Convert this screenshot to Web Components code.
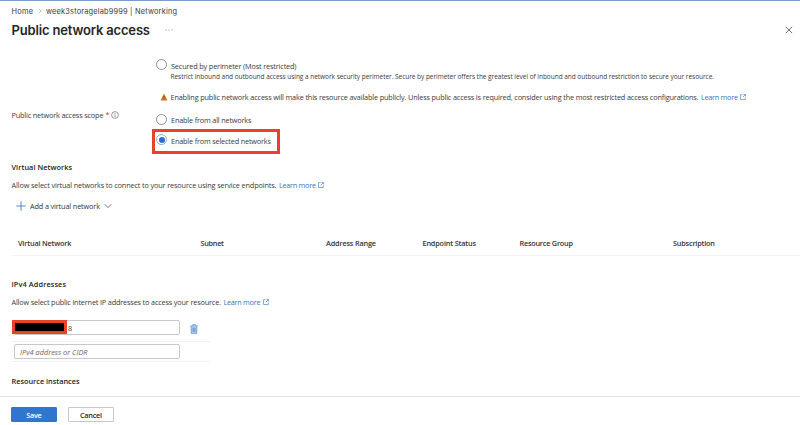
<!DOCTYPE html>
<html lang="en">
<head>
<meta charset="utf-8">
<title>Public network access</title>
<style>
    html, body{
        margin: 0;
        height: 100%;
        overflow: hidden;
        background: #fff;
    }
</style>
</head>
<body>
<network-page></network-page>

<script>
// one line of text, tracked so that it fills the given width
class textLine extends HTMLElement{
    constructor(){
        super();
        this.attachShadow({mode:"open"});
    }
    connectedCallback(){
        this.shadowRoot.innerHTML = `
        <style>
            :host{ display: block; flex: none; white-space: nowrap; }
            span{ display: inline-block; }
        </style>
        <span><slot></slot></span>`;
        const width = parseFloat(this.getAttribute("width"));
        const span = this.shadowRoot.querySelector("span");
        const natural = span.getBoundingClientRect().width;
        const count = this.textContent.length;
        this.style.width = width + "px";
        span.style.letterSpacing = (width - natural) / Math.max(1, count - 1) + "px";
    }
}

class uiIcon extends HTMLElement{
    constructor(){
        super();
        this.attachShadow({mode:"open"});
    }
    connectedCallback(){
        const shapes = {
            sep: [4, 6, `<path d="M1 .8 3 3 1 5.2" stroke="#888" stroke-width=".6"/>`],
            close: [8, 8, `<path d="M.8.8 7.2 7.2M7.2.8.8 7.2" stroke="#444" stroke-width=".75"/>`],
            dots: [8, 2, `<path d="M.5 1h1M3.5 1h1M6.5 1h1" stroke="#777" stroke-width=".8"/>`],
            warn: [8, 8, `<path d="M4 .6 7.6 7.5H.4z" fill="#d17a2b"/><path d="M4 3v2.2M4 5.8v.8" stroke="#5a3310" stroke-width=".7"/>`],
            info: [8, 8, `<circle cx="4" cy="4" r="3.4" stroke="#555" stroke-width=".6"/><path d="M4 3.5V6M4 2v.8" stroke="#555" stroke-width=".65"/>`],
            open: [6, 6, `<path d="M2.6.7H.5v4.8h4.8V3.4M3.5.5h2v2M5.4.6 2.8 3.2" stroke="#3f7fc6" stroke-width=".65"/>`],
            plus: [10, 10, `<path d="M5 .3v9.4M.3 5h9.4" stroke="#3f7fc6" stroke-width=".9"/>`],
            down: [8, 6, `<path d="M.7 1.2 4 4.6 7.3 1.2" stroke="#444" stroke-width=".7"/>`],
            bin: [8, 10, `<path d="M1.2 2.2h5.6v7.1H1.2z" fill="#bcd6f0"/><path d="M.2 1.9h7.6M2.7 1.7V.6h2.6v1.1M1.2 2.2v7.2h5.6V2.2M3 3.5V8M4 3.5V8M5 3.5V8" stroke="#3c7cc0" stroke-width=".65"/>`]
        };
        const [w, h, body] = shapes[this.getAttribute("name")];
        this.shadowRoot.innerHTML = `
        <style>
            :host{ display: block; flex: none; width: ${w}px; height: ${h}px; }
            svg{ display: block; }
        </style>
        <svg width="${w}" height="${h}" viewBox="0 0 ${w} ${h}" fill="none">${body}</svg>`;
    }
}

class learnMore extends HTMLElement{
    constructor(){
        super();
        this.attachShadow({mode:"open"});
    }
    connectedCallback(){
        this.shadowRoot.innerHTML = `
        <style>
            :host{ display: flex; align-items: center; gap: 2px; margin-left: 2.5px; color: #3576bd; }
        </style>
        <text-line width="37">Learn more</text-line><ui-icon name="open"></ui-icon>`;
    }
}

class radioOption extends HTMLElement{
    constructor(){
        super();
        this.attachShadow({mode:"open"});
    }
    connectedCallback(){
        this.shadowRoot.innerHTML = `
        <style>
            :host{ display: flex; align-items: center; gap: 4px; height: 11px; }
            .ring{
                box-sizing: border-box;
                width: 11px;
                height: 11px;
                border: 1px solid #8f8f8f;
                border-radius: 50%;
                display: grid;
                place-items: center;
            }
            :host([checked]) .ring{ border-color: #86abd8; }
            :host([checked]) .ring::after{
                content: "";
                width: 6px;
                height: 6px;
                border-radius: 50%;
                background: #2a6fcb;
            }
            .label{ padding-top: 2px; }
        </style>
        <div class="ring"></div>
        <div class="label"><slot></slot></div>`;
    }
}

class ipInput extends HTMLElement{
    constructor(){
        super();
        this.attachShadow({mode:"open"});
    }
    connectedCallback(){
        this.shadowRoot.innerHTML = `
        <style>
            :host{
                box-sizing: border-box;
                display: flex;
                align-items: center;
                width: 166px;
                height: 15px;
                border: 1px solid #c8c8c8;
                border-radius: 2px;
                padding-left: 5px;
                position: relative;
            }
        </style>
        <slot></slot>`;
    }
}

class uiButton extends HTMLElement{
    constructor(){
        super();
        this.attachShadow({mode:"open"});
    }
    connectedCallback(){
        this.shadowRoot.innerHTML = `
        <style>
            :host{
                box-sizing: border-box;
                display: flex;
                align-items: center;
                justify-content: center;
                width: 46px;
                height: 15px;
                border: 1px solid #c8c8c8;
                border-radius: 1px;
                color: #2b2b2b;
                font-weight: 600;
            }
            :host([primary]){ background: #3075ce; border-color: #3075ce; color: #fff; }
        </style>
        <slot></slot>`;
    }
}

class networkPage extends HTMLElement{
    constructor(){
        super();
        this.attachShadow({mode:"open"});
    }
    connectedCallback(){
        this.shadowRoot.innerHTML = `
        <style>
            :host{
                box-sizing: border-box;
                display: flex;
                flex-direction: column;
                width: 800px;
                height: 425px;
                border-top: 1px solid #7b9dcc;
                font: 7.3px/10px "Open Sans", "Noto Sans", sans-serif;
                color: #3a3a3a;
            }
            .row{ display: flex; align-items: center; padding-left: 11.5px; }
            .crumbs{ height: 19px; padding-top: 1px; font-family: Inter, sans-serif; font-size: 7.4px; }
            .crumbs ui-icon{ margin: 0 4px 2px 5px; }
            .title{
                height: 18px;
                padding-right: 7px;
                font: 600 13px/18px Inter, sans-serif;
                color: #262626;
            }
            .title ui-icon[name="dots"]{ margin-left: 14.5px; }
            .title ui-icon[name="close"]{ margin-left: auto; }
            .form{
                display: grid;
                grid-template-columns: 144.5px 1fr;
                padding: 20px 0 0 11.5px;
                height: 95px;
            }
            .scope{ display: flex; height: 10px; padding-top: 51px; align-items: center; }
            .scope text-line[width="3"]{ margin-left: 2px; color: #c0392b; }
            .scope ui-icon{ margin-left: 2.5px; }
            .note{ font-size: 6.5px; line-height: 9px; padding-left: 14.5px; margin-top: 1.5px; }
            .warning{ display: flex; align-items: center; padding-left: 4px; margin-top: 10px; height: 12px; }
            .warning ui-icon{ margin-right: 2.5px; }
            .all{ margin-top: 11px; }
            .selected{
                box-sizing: border-box;
                width: 128px;
                height: 25px;
                margin: 4px 0 0 -4px;
                padding: 2.5px 0 0 1px;
                border: 3px solid #e8432a;
            }
            .heading{ height: 18px; font-weight: 600; color: #222; }
            .text{ height: 18px; }
            .add{ height: 22px; margin-top: 1px; padding-left: 15.5px; color: #333; }
            .add ui-icon[name="plus"]{ margin-right: 4.5px; }
            .add ui-icon[name="down"]{ margin-left: 4px; }
            .table{
                display: grid;
                grid-template-columns: 182.5px 125.5px 96.5px 97px 153.5px 1fr;
                align-items: center;
                height: 24px;
                margin: 14px 0 0 11.5px;
                padding-left: 6.5px;
                border-bottom: 1px solid #f3f3f3;
                font-weight: 600;
                color: #333;
            }
            .ip{
                display: flex;
                align-items: center;
                gap: 10px;
                width: 196px;
                height: 19px;
                margin-left: 11.5px;
                padding-left: 2.5px;
                border-bottom: 1px solid #f1f1f1;
            }
            .first{ align-items: flex-start; height: 21px; margin-top: 9px; }
            .first ip-input{ padding-left: 53px; }
            .first ui-icon{ margin-top: 4px; }
            .redacted{
                position: absolute;
                left: -3px;
                top: -1.5px;
                box-sizing: border-box;
                width: 55px;
                height: 14px;
                border: 3px solid #e8432a;
                background: #000;
            }
            .placeholder{ font-style: italic; color: #666; }
            .instances{ margin-top: 10px; }
            .footer{
                display: flex;
                align-items: center;
                gap: 11px;
                margin-top: auto;
                padding: 7px 0 0 11px;
                box-sizing: border-box;
                border-top: 1px solid #e4e4e4;
                flex: none;
                height: 29px;
            }
        </style>
        <div class="row crumbs">
            <text-line width="21.5">Home</text-line>
            <ui-icon name="sep"></ui-icon>
            <text-line width="131">week3storagelab9999 | Networking</text-line>
        </div>
        <div class="row title">
            <text-line width="138.5">Public network access</text-line>
            <ui-icon name="dots"></ui-icon>
            <ui-icon name="close"></ui-icon>
        </div>
        <div class="form">
            <div class="scope">
                <text-line width="92">Public network access scope</text-line>
                <text-line width="3">*</text-line>
                <ui-icon name="info"></ui-icon>
            </div>
            <div>
                <radio-option><text-line width="125.5">Secured by perimeter (Most restricted)</text-line></radio-option>
                <div class="note"><text-line width="543.5">Restrict inbound and outbound access using a network security perimeter. Secure by perimeter offers the greatest level of inbound and outbound restriction to secure your resource.</text-line></div>
                <div class="warning">
                    <ui-icon name="warn"></ui-icon>
                    <text-line width="528">Enabling public network access will make this resource available publicly. Unless public access is required, consider using the most restricted access configurations.</text-line>
                    <learn-more></learn-more>
                </div>
                <radio-option class="all"><text-line width="80.5">Enable from all networks</text-line></radio-option>
                <div class="selected">
                    <radio-option checked><text-line width="100">Enable from selected networks</text-line></radio-option>
                </div>
            </div>
        </div>
        <div class="row heading" style="margin-top: 4px"><text-line width="60.5">Virtual Networks</text-line></div>
        <div class="row text">
            <text-line width="265">Allow select virtual networks to connect to your resource using service endpoints.</text-line>
            <learn-more></learn-more>
        </div>
        <div class="row add">
            <ui-icon name="plus"></ui-icon>
            <text-line width="70">Add a virtual network</text-line>
            <ui-icon name="down"></ui-icon>
        </div>
        <div class="table">
            <text-line width="53.5">Virtual Network</text-line>
            <text-line width="23.5">Subnet</text-line>
            <text-line width="50">Address Range</text-line>
            <text-line width="53.5">Endpoint Status</text-line>
            <text-line width="53.5">Resource Group</text-line>
            <text-line width="42">Subscription</text-line>
        </div>
        <div class="row heading" style="margin-top: 19px"><text-line width="54.5">IPv4 Addresses</text-line></div>
        <div class="row text">
            <text-line width="209.5">Allow select public internet IP addresses to access your resource.</text-line>
            <learn-more></learn-more>
        </div>
        <div class="ip first">
            <ip-input><div class="redacted"></div><text-line width="4">8</text-line></ip-input>
            <ui-icon name="bin"></ui-icon>
        </div>
        <div class="ip">
            <ip-input><text-line class="placeholder" width="67.5">IPv4 address or CIDR</text-line></ip-input>
        </div>
        <div class="row heading instances"><text-line width="68">Resource instances</text-line></div>
        <div class="footer">
            <ui-button primary><text-line width="15.5">Save</text-line></ui-button>
            <ui-button><text-line width="22">Cancel</text-line></ui-button>
        </div>`;
    }
}

customElements.define("text-line", textLine);
customElements.define("ui-icon", uiIcon);
customElements.define("learn-more", learnMore);
customElements.define("radio-option", radioOption);
customElements.define("ip-input", ipInput);
customElements.define("ui-button", uiButton);
customElements.define("network-page", networkPage);
</script>
</body>
</html>
